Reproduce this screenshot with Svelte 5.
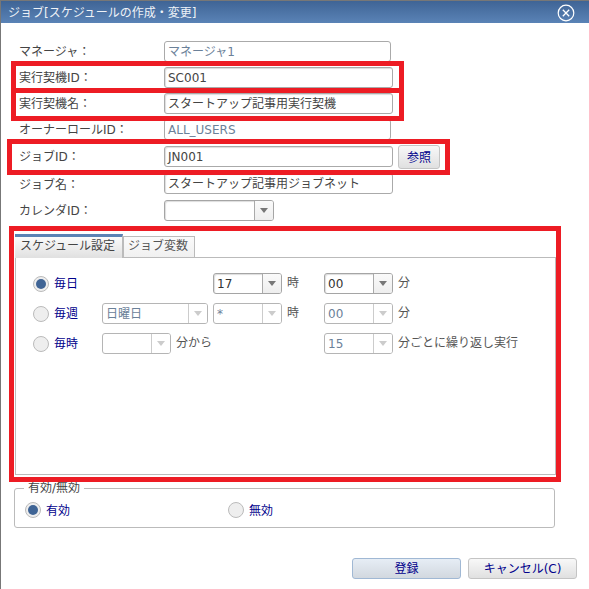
<script>
    // schedule rows: kind, active state and the selects that go with them
    let daily = true;
    let enabled = true;
</script>

{#snippet select(value, size, disabled)}
    <div class="select {size}" class:disabled>
        <span class="value">{value}</span>
        <span class="arrow"><i></i></span>
    </div>
{/snippet}

{#snippet radio(label, checked)}
    <span class="radio" class:checked><i></i></span>
    <span class="radio-label">{label}</span>
{/snippet}

<div class="dialog">
    <header class="titlebar">
        <span>ジョブ[スケジュールの作成・変更]</span>
        <svg width="18" height="18" viewBox="0 0 18 18" class="close">
            <circle cx="9" cy="9" r="7.8" fill="none" stroke="#fff" stroke-width="1.2"/>
            <path d="M5.8 5.8l6.4 6.4M12.2 5.8l-6.4 6.4" stroke="#fff" stroke-width="1.3" fill="none"/>
        </svg>
    </header>

    <div class="form">
        <div class="row">
            <label>マネージャ：</label>
            <div class="input readonly">マネージャ1</div>
        </div>
        <div class="row">
            <label>実行契機ID：</label>
            <div class="input">SC001</div>
        </div>
        <div class="row">
            <label>実行契機名：</label>
            <div class="input">スタートアップ記事用実行契機</div>
        </div>
        <div class="row">
            <label>オーナーロールID：</label>
            <div class="input readonly">ALL_USERS</div>
        </div>
        <div class="row job-id">
            <label>ジョブID：</label>
            <div class="input">JN001</div>
            <button class="browse">参照</button>
        </div>
        <div class="row job-name">
            <label>ジョブ名：</label>
            <div class="input">スタートアップ記事用ジョブネット</div>
        </div>
        <div class="row calendar">
            <label>カレンダID：</label>
            {@render select('', 'w110', false)}
        </div>
    </div>

    <div class="tabs">
        <div class="tab active">スケジュール設定</div>
        <div class="tab">ジョブ変数</div>
    </div>
    <div class="panel">
        <div class="schedule">
            <div class="cell">{@render radio('毎日', daily)}</div>
            <div></div>
            <div class="cell">{@render select('17', 'w69', false)}<span class="unit">時</span></div>
            <div class="cell">{@render select('00', 'w69', false)}<span class="unit">分</span></div>

            <div class="cell">{@render radio('毎週', false)}</div>
            <div class="cell">{@render select('日曜日', 'w106', true)}</div>
            <div class="cell">{@render select('*', 'w69', true)}<span class="unit">時</span></div>
            <div class="cell">{@render select('00', 'w69', true)}<span class="unit">分</span></div>

            <div class="cell">{@render radio('毎時', false)}</div>
            <div class="cell">{@render select('', 'w69', true)}<span class="unit">分から</span></div>
            <div></div>
            <div class="cell">{@render select('15', 'w69', true)}<span class="unit">分ごとに繰り返し実行</span></div>
        </div>
    </div>

    <fieldset class="validity">
        <legend>有効/無効</legend>
        <div class="choice">{@render radio('有効', enabled)}</div>
        <div class="choice">{@render radio('無効', false)}</div>
    </fieldset>

    <footer class="actions">
        <button class="primary">登録</button>
        <button>キャンセル(C)</button>
    </footer>

    <!-- red annotation boxes drawn over the screenshot -->
    <div class="mark mark-a"></div>
    <div class="mark mark-b"></div>
    <div class="mark mark-c"></div>
    <div class="mark mark-d"></div>
</div>

<style>
    :global(body) {
        background: #fff;
    }
    .dialog {
        position: relative;
        width: 589px;
        height: 589px;
        box-sizing: border-box;
        overflow: hidden;
        border-left: 1px solid #777;
        background: #fff;
        font-family: "DejaVu Sans", "Noto Sans CJK JP", sans-serif;
        font-size: 12px;
        color: #444;
    }
    .titlebar {
        height: 23px;
        box-sizing: border-box;
        padding: 0 7px 2px;
        display: flex;
        align-items: center;
        justify-content: space-between;
        border-top: 1px solid #777;
        background: linear-gradient(#3f6495, #5a83b6);
        color: #eef2f7;
        font-size: 12px;
    }
    .close {
        margin-right: 7px;
        margin-top: 3px;
    }
    .form {
        margin-top: 18px;
        padding-left: 18px;
        display: flex;
        flex-direction: column;
        gap: 5px;
    }
    .row {
        height: 21px;
        display: flex;
        align-items: center;
    }
    .row label {
        width: 145px;
        margin-top: -2px;
    }
    .input {
        width: 229px;
        height: 21px;
        box-sizing: border-box;
        padding: 0 3px;
        border: 1px solid #aaa;
        border-radius: 3px;
        line-height: 21px;
        white-space: nowrap;
        background: #fff;
        box-shadow: inset 1px 1px 1px #ddd;
    }
    .readonly {
        width: 227px;
        color: #6b8199;
        box-shadow: none;
    }
    .job-id {
        margin-top: 1px;
    }
    .job-name {
        margin-top: 1px;
    }
    .job-name label {
        margin-top: -1px;
    }
    .calendar {
        margin-top: 1px;
    }
    button {
        font: inherit;
        padding: 0;
        color: #00008b;
        border: 1px solid #c4c4c4;
        border-radius: 3px;
        background: linear-gradient(#f8f8f8, #e0e0e0);
    }
    .browse {
        width: 42px;
        height: 24px;
        margin-left: 5px;
    }
    .select {
        display: flex;
        height: 21px;
        box-sizing: border-box;
        border: 1px solid #a5a5a5;
        border-radius: 3px;
        background: #fff;
        box-shadow: inset 1px 1px 1px #ddd;
    }
    .w69 { width: 69px; }
    .w106 { width: 106px; }
    .w110 { width: 110px; }
    .value {
        flex: 1;
        padding-left: 3px;
        line-height: 21px;
        color: #333;
    }
    .arrow {
        width: 18px;
        display: flex;
        align-items: center;
        justify-content: center;
        border-left: 1px solid #aaa;
        background: linear-gradient(#fafafa, #eee);
        border-radius: 0 2px 2px 0;
    }
    .arrow i {
        width: 0;
        height: 0;
        border: 4px solid transparent;
        border-top: 5px solid #777;
        border-bottom: 0;
    }
    .disabled {
        border-color: #b5b5b5;
        box-shadow: none;
    }
    .disabled .value {
        color: #6b8199;
    }
    .disabled .arrow {
        background: #fff;
        border-left-color: #ccc;
    }
    .disabled .arrow i {
        border-top-color: #ccc;
    }
    .tabs {
        margin: 13px 0 0 14px;
        height: 24px;
        display: flex;
        align-items: flex-end;
        position: relative;
        z-index: 1;
    }
    .tab {
        width: 72px;
        height: 21px;
        box-sizing: border-box;
        padding-right: 2px;
        border: 1px solid #bbb;
        border-bottom: 0;
        text-align: center;
        line-height: 18px;
        background: linear-gradient(#fafafa, #f0f0f0);
        color: #555;
        margin-bottom: 1px;
    }
    .tab.active {
        width: 108px;
        height: 24px;
        margin-bottom: 0;
        border: 0;
        border-top: 3px solid #5b82b4;
        border-right: 1px solid #bbb;
        background: linear-gradient(#fbfbfb, #e0e0e0);
        line-height: 19px;
        color: #444;
    }
    .panel {
        margin: -1px 0 0 14px;
        width: 541px;
        height: 218px;
        box-sizing: border-box;
        border: 1px solid #bbb;
        padding: 15px 0 0 17px;
    }
    .schedule {
        display: grid;
        grid-template-columns: 69px 111px 111px 1fr;
        grid-auto-rows: 21px;
        row-gap: 9px;
    }
    .cell {
        display: flex;
        align-items: center;
        gap: 5px;
    }
    .unit {
        margin-top: -4px;
        color: #555;
    }
    .schedule .radio-label {
        margin-top: -2px;
    }
    .radio {
        width: 16px;
        height: 16px;
        box-sizing: border-box;
        flex: none;
        border: 1px solid #bbb;
        border-radius: 50%;
        background: #eee;
        display: flex;
        align-items: center;
        justify-content: center;
    }
    .radio.checked i {
        width: 10px;
        height: 10px;
        border-radius: 50%;
        background: #3f6495;
    }
    .radio-label {
        color: #00008b;
    }
    .validity {
        margin: 6px 0 0 13px;
        padding: 0 0 0 10px;
        width: 541px;
        height: 47px;
        box-sizing: border-box;
        border: 1px solid #bbb;
        border-radius: 3px;
        display: grid;
        grid-template-columns: 203px 1fr;
        align-items: center;
    }
    .validity legend {
        margin-left: -1px;
        padding: 0 4px;
        line-height: 14px;
        font-size: 12px;
    }
    .choice {
        display: flex;
        align-items: center;
        gap: 5px;
        margin-top: -3px;
    }
    .actions {
        margin: 30px 12px 0 0;
        display: flex;
        justify-content: flex-end;
        gap: 7px;
    }
    .actions button {
        width: 109px;
        height: 21px;
        line-height: 18px;
    }
    .actions .primary {
        border-color: #a0b8d4;
        background: linear-gradient(#e6edf5, #d2d8df);
    }
    .mark {
        position: absolute;
        box-sizing: border-box;
        border: 5px solid #ed1c24;
        pointer-events: none;
        z-index: 2;
    }
    .mark-a { left: 10px; top: 61px; width: 393px; height: 32px; }
    .mark-b { left: 10px; top: 88px; width: 393px; height: 33px; }
    .mark-c { left: 6px; top: 139px; width: 443px; height: 36px; }
    .mark-d { left: 8px; top: 226px; width: 552px; height: 256px; }
</style>
